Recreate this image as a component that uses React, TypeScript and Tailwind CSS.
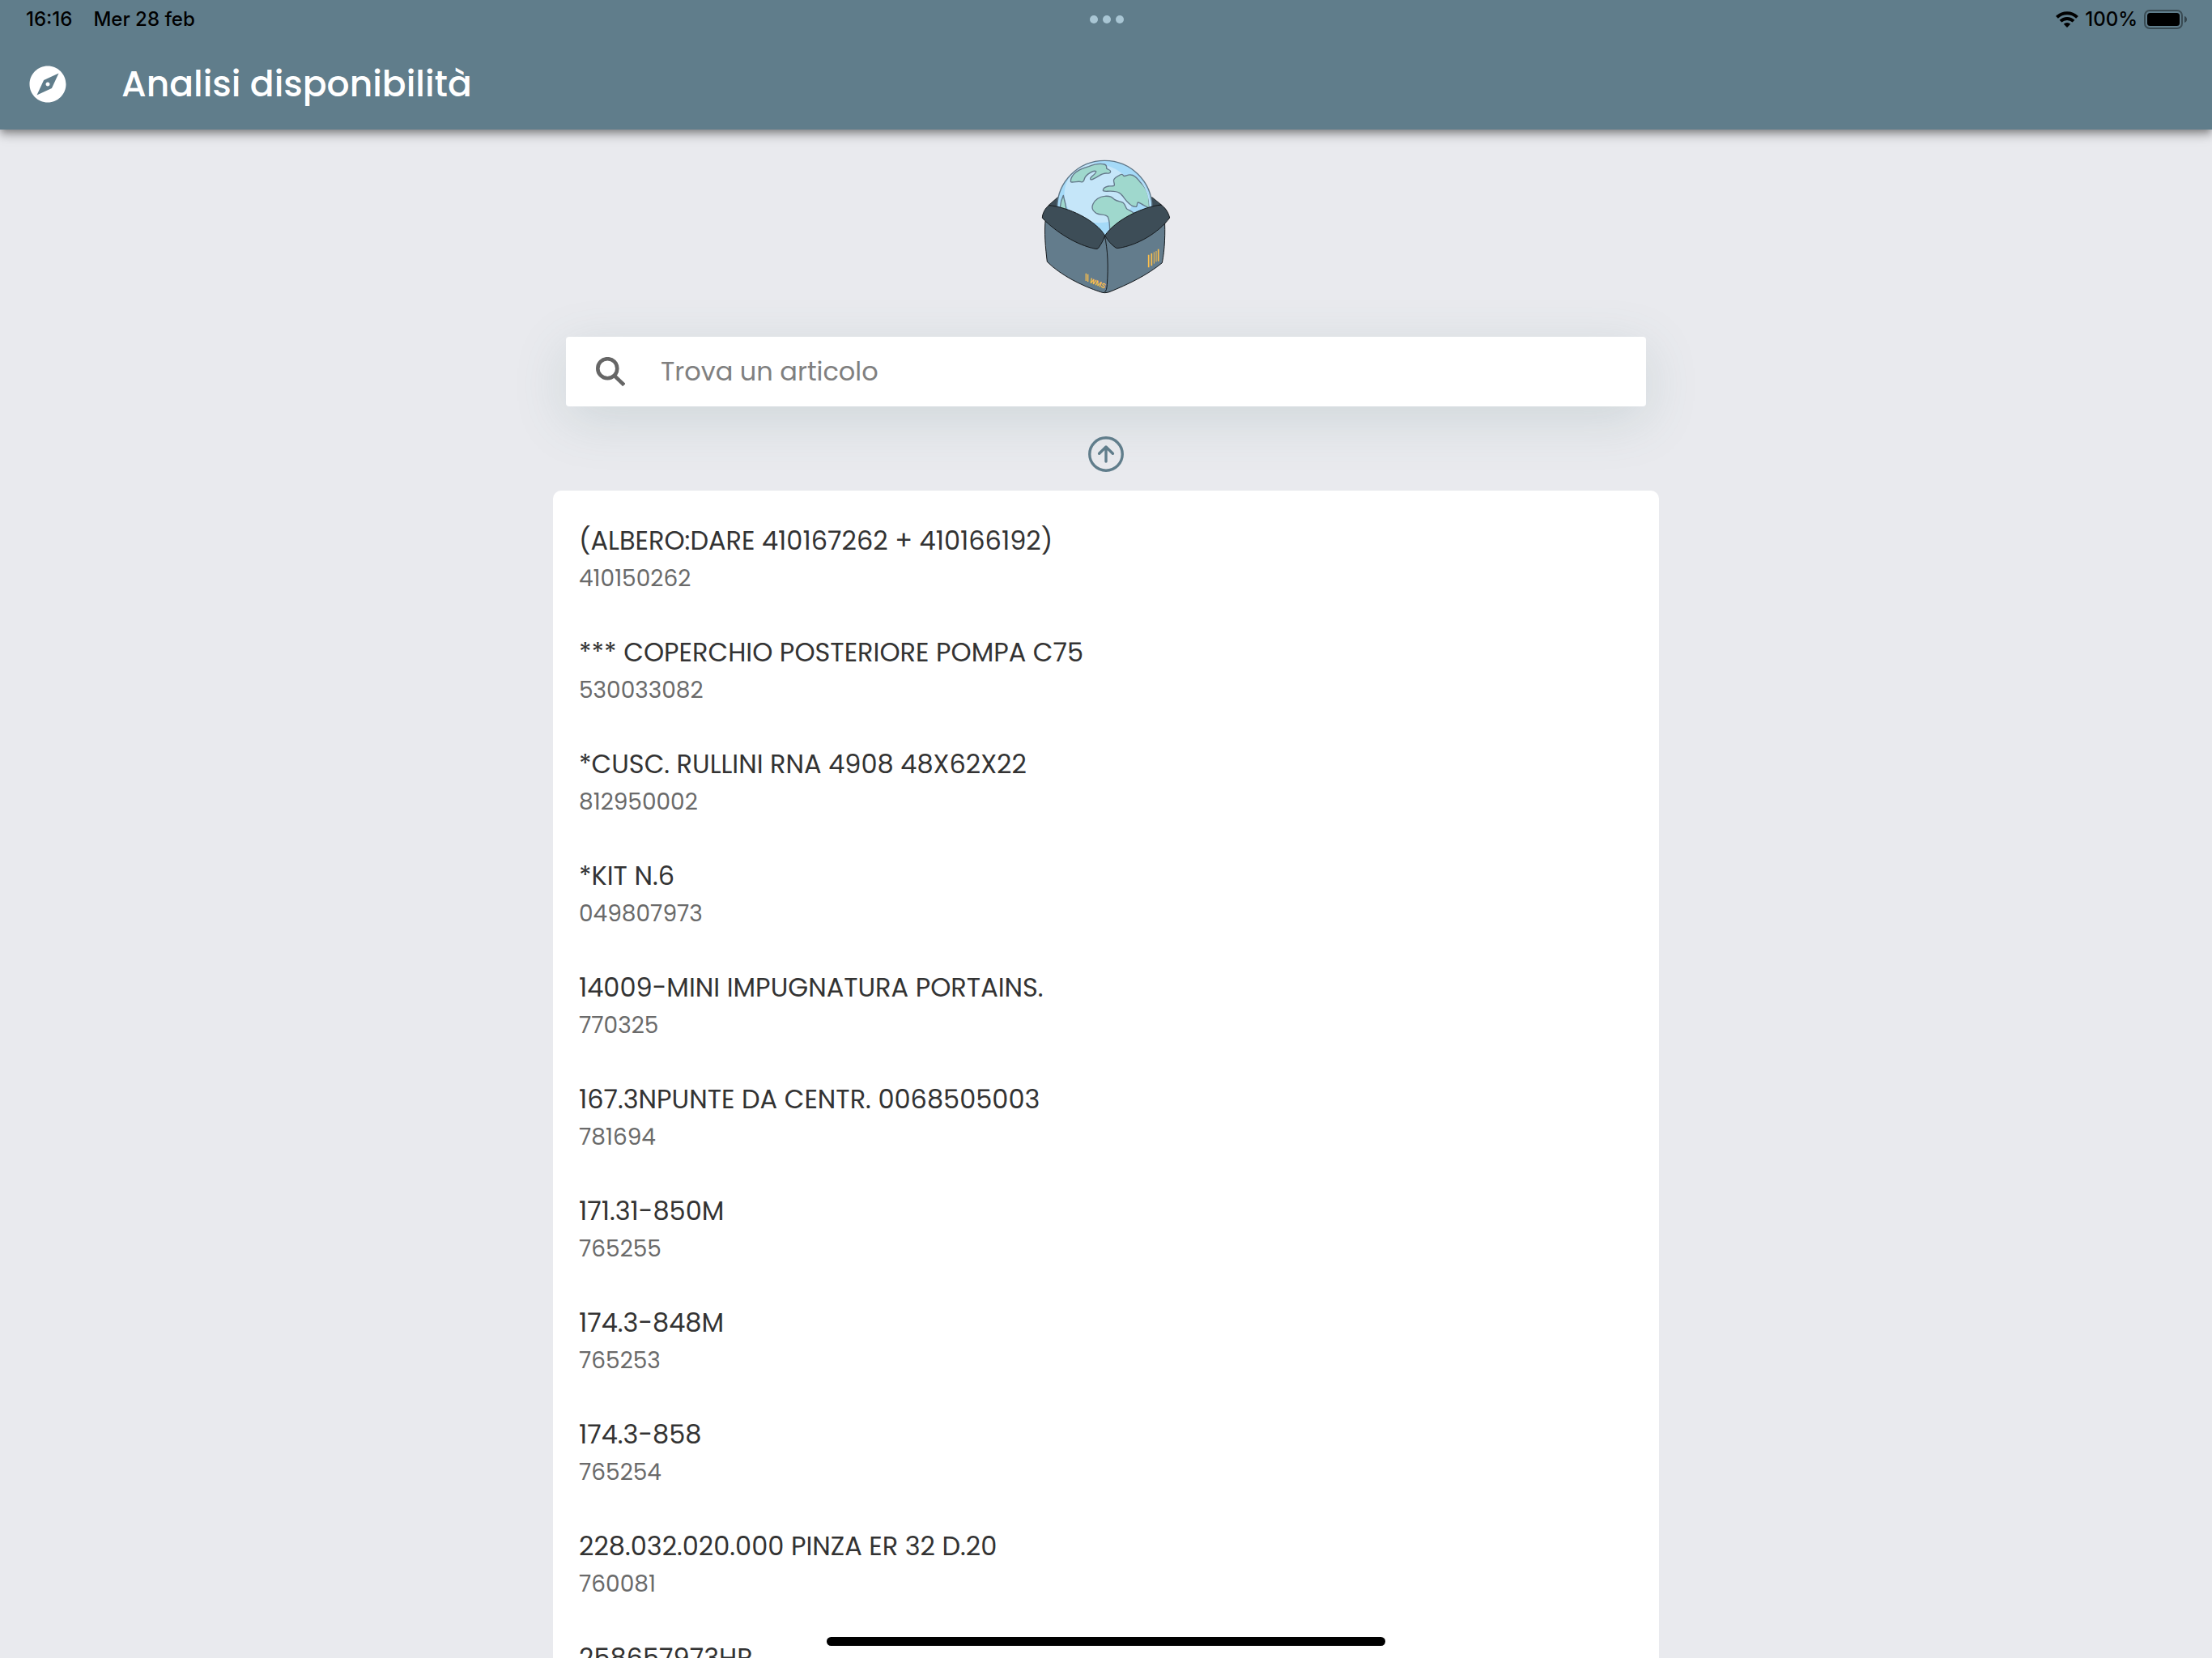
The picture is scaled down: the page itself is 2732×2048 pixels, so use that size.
import React from "react";
import { MdExplore } from "react-icons/md";
import { IoArrowUpCircleOutline } from "react-icons/io5";

const items = [
  { name: "(ALBERO:DARE 410167262 + 410166192)", code: "410150262" },
  { name: "*** COPERCHIO POSTERIORE POMPA C75", code: "530033082" },
  { name: "*CUSC. RULLINI RNA 4908 48X62X22", code: "812950002" },
  { name: "*KIT N.6", code: "049807973" },
  { name: "14009-MINI IMPUGNATURA PORTAINS.", code: "770325" },
  { name: "167.3NPUNTE DA CENTR. 0068505003", code: "781694" },
  { name: "171.31-850M", code: "765255" },
  { name: "174.3-848M", code: "765253" },
  { name: "174.3-858", code: "765254" },
  { name: "228.032.020.000 PINZA ER 32 D.20", code: "760081" },
  { name: "258657973HP", code: "" },
];

function WifiIcon() {
  return (
    <svg viewBox="0 0 28 20" className="h-5 w-7" fill="none" stroke="#000" strokeWidth="4" aria-hidden="true">
      <path d="M1.5 7.4a18 18 0 0 1 25 0" />
      <path d="M6 12.2a11.4 11.4 0 0 1 16 0" />
      <path d="M14 20l-4.2-4.2a6 6 0 0 1 8.4 0z" fill="#000" stroke="none" />
    </svg>
  );
}

function BatteryIcon() {
  return (
    <svg viewBox="0 0 54 24" className="h-6 w-[54px]" aria-hidden="true">
      <rect x="1" y="1" width="46" height="22" rx="6" fill="none" stroke="#000" strokeOpacity="0.4" strokeWidth="2" />
      <rect x="4" y="4" width="40" height="16" rx="3.5" />
      <path d="M50 8c2 .6 3 2.2 3 4s-1 3.4-3 4z" fillOpacity="0.45" />
    </svg>
  );
}

function SearchIcon() {
  return (
    <svg viewBox="0 0 36 36" className="size-9 shrink-0" fill="none" stroke="#666" aria-hidden="true">
      <circle cx="14.3" cy="14.2" r="12" strokeWidth="4.6" />
      <path d="M22.6 22.8 34.8 34.6" strokeWidth="4.6" />
    </svg>
  );
}

function BoxLogo() {
  return (
    <svg viewBox="3 0 570 570" className="size-[190px]" role="img" aria-label="WMS" strokeLinejoin="round" strokeLinecap="round">
      <path d="M108 192 76 220 180 270 180 200zM460 192 492 218 400 260 400 200z" fill="#3d4d57" stroke="#15191c" strokeWidth="2.5" />
      <clipPath id="globe">
        <circle cx="283" cy="231" r="176" />
      </clipPath>
      <g clipPath="url(#globe)">
        <circle cx="283" cy="231" r="176" fill="#a5daf8" />
        <path d="M215 66C160 90 134 135 134 180c0 50 30 90 80 100 50 12 110 6 150-30 30-30 40-70 22-105-22-38-66-68-116-76-20-5-40-5-55-3z" fill="#c5e6f9" />
        <g fill="#9fd8cd" stroke="#64798a" strokeWidth="4">
          <path d="M157 132c0-14 10-26 21-35 14-10 28-15 46-20 20-8 42-12 58-8 7 2 9 8 8 15 4 4 15 5 15 11 0 7-8 8-16 7-16 0-24 8-38 16-7 4-17 9-20 7-4-4 3-9 8-14 7-6 14-12 12-16-5-3-15 1-23 6-13 8-18 14-20 22-2 8-6 13-12 11-10-4-23 2-35 1-3 0-4-1-4-3z" />
          <path d="M277 166c0-9 10-14 20-16 8-1 20 2 22-4 1-6-4-13-2-20 4-8 12-12 20-16 6-4 12-6 15 0 4 8 14-4 28-2 17 1 24 14 34 26 16 14 26 30 31 52 4 16 2 30 4 46l-22-12c-8-4-14-10-21-10-5 4 0 12-6 16-9 1-20-5-27-12-14-12-22-30-34-38-14-10-34-8-50-7-6 0-12-2-12-3z" />
          <path d="M302 320c0-26-1-44-7-56-9-13-27-5-43-14-13-8-18-21-12-34 7-16 25-28 43-29 22-2 28 4 36 12 12 8 24 7 32 12 9 8 8 15 14 23 10 7 18 8 26 16l-10 50z" />
          <path d="M118 236c0-20 5-38 12-52 3 16 9 32 10 46 2 9 3 14 2 22z" />
        </g>
      </g>
      <path d="M420 132a168 168 0 0 1 31 100" fill="none" stroke="#b9e1f8" strokeWidth="5" />
      <circle cx="283" cy="231" r="176" fill="none" stroke="#5f7788" strokeWidth="4" />
      <path d="M283 334 64 270C58 320 64 380 70 430 120 480 200 520 268 542c10 4 20 4 32 0 70-28 140-62 196-108 10-50 12-110 9-165z" fill="#637c8c" stroke="#15191c" strokeWidth="3" />
      <path d="M283 334c12 50 14 120 9 180-1 15-2 24-10 30" fill="none" stroke="#15191c" strokeWidth="3" />
      <path d="M76 221c70 5 175 55 208 112-5 16-14 32-24 46q-4 5-12 3C180 368 105 322 52 268c0-18 12-38 24-47z" fill="#3d4d57" stroke="#15191c" strokeWidth="3" />
      <path d="M492 219c-70 8-168 55-208 114 10 18 24 34 40 45q4 3 12 1c66-10 145-54 188-112-4-18-16-38-32-48z" fill="#3d4d57" stroke="#15191c" strokeWidth="3" />
      <g stroke="#ffc04a" strokeLinecap="butt" fill="none">
        <path d="M446 404v47M457 399v46M482 383v45" strokeWidth="5" />
        <path d="M466 394v43M474 390v40" strokeWidth="3" />
        <path d="M214 473v28M221 476v28" strokeWidth="4" />
      </g>
      <text x="225" y="507" fontSize="26" fill="#ffc04a" transform="rotate(22 225 507)" className="font-[Roboto,sans-serif] font-bold">
        WMS
      </text>
    </svg>
  );
}

export default function App() {
  return (
    <div className="flex h-screen flex-col overflow-hidden bg-[#e9eaee] font-[Poppins,Lato,sans-serif]">
      <header className="relative z-10 shrink-0 bg-[#607d8b] shadow-[0_4px_8px_-2px_rgba(0,0,0,0.3),0_8px_10px_rgba(0,0,0,0.16),0_2px_20px_rgba(0,0,0,0.14)]">
        <div className="grid h-12 grid-cols-3 items-center pr-[30px] pl-8 font-[Inter,sans-serif] text-2xl font-medium text-black">
          <div className="flex gap-[26px]">
            <span>16:16</span>
            <span>Mer 28 feb</span>
          </div>
          <div className="flex justify-center gap-1.5">
            <span className="size-2.5 rounded-full bg-[#a9c6d4]" />
            <span className="size-2.5 rounded-full bg-[#a9c6d4]" />
            <span className="size-2.5 rounded-full bg-[#a9c6d4]" />
          </div>
          <div className="flex items-center justify-end gap-2">
            <WifiIcon />
            <span>100%</span>
            <BatteryIcon />
          </div>
        </div>
        <div className="flex h-28 items-center gap-16 px-8 text-white">
          <button type="button" aria-label="Esplora">
            <MdExplore className="size-[54px]" />
          </button>
          <h1 className="text-[44px] leading-none font-medium">Analisi disponibilità</h1>
        </div>
      </header>

      <main className="mx-auto flex w-1/2 flex-col items-center pt-5">
        <BoxLogo />
        <label className="mt-[46px] flex h-[86px] w-[calc(100%-32px)] shrink-0 items-center gap-11 rounded-sm bg-white pr-8 pl-[37px] shadow-[0_16px_64px_rgba(80,120,120,0.17)]">
          <SearchIcon />
          <input
            type="search"
            aria-label="Trova un articolo"
            placeholder="Trova un articolo"
            className="min-w-0 flex-1 bg-transparent text-[32px] text-[#333] outline-none placeholder:text-[#808080]"
          />
        </label>
        <button type="button" aria-label="Torna su" className="mt-8 mb-[18px] text-[#607d8b]">
          <IoArrowUpCircleOutline className="size-[54px]" />
        </button>
        <ul className="w-full rounded-t-[10px] bg-white pt-3.5">
          {items.map((item) => (
            <li key={item.name} className="flex flex-col px-8 pt-6 pb-5">
              <span className="text-[32px] leading-[48px] text-[#333]">{item.name}</span>
              <span className="text-[28px] leading-[46px] text-[#6a6a6a]">{item.code}</span>
            </li>
          ))}
        </ul>
      </main>

      <div className="fixed bottom-[15px] left-1/2 h-[11px] w-[690px] -translate-x-1/2 rounded-full bg-black" />
    </div>
  );
}
